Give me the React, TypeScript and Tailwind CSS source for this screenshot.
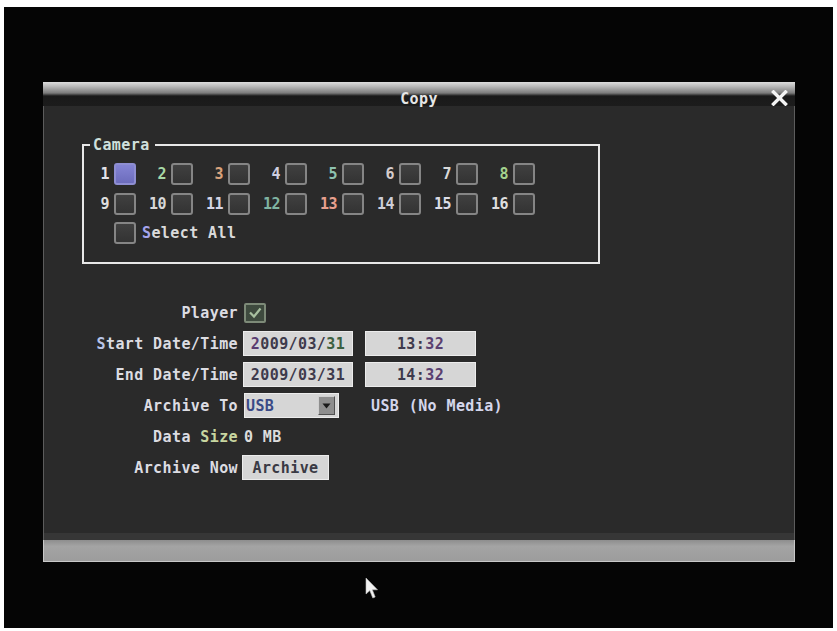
import React from "react";

const mono = "font-['DejaVu_Sans_Mono','Liberation_Mono',monospace] font-bold text-[15px] tracking-[0.4px] leading-[16px]";

const cams: { n: string; c: string }[] = [
  { n: "1", c: "text-[#e4e4ea]" },
  { n: "2", c: "text-[#a6d8a6]" },
  { n: "3", c: "text-[#d9a37c]" },
  { n: "4", c: "text-[#cfcfe0]" },
  { n: "5", c: "text-[#8ec2b0]" },
  { n: "6", c: "text-[#d6cccc]" },
  { n: "7", c: "text-[#d8d8d8]" },
  { n: "8", c: "text-[#a4d28e]" },
  { n: "9", c: "text-[#dedede]" },
  { n: "10", c: "text-[#d8d8d8]" },
  { n: "11", c: "text-[#d6d6e6]" },
  { n: "12", c: "text-[#80b4a2]" },
  { n: "13", c: "text-[#e8a08e]" },
  { n: "14", c: "text-[#cfcfd8]" },
  { n: "15", c: "text-[#dcdce6]" },
  { n: "16", c: "text-[#dedede]" },
];

function Box({ on = false }: { on?: boolean }) {
  return (
    <div
      className={
        on
          ? "w-[22px] h-[22px] rounded-[3px] border-2 border-[#8e8ed2] bg-[linear-gradient(to_bottom,#8484d4,#6c6cbc)]"
          : "w-[22px] h-[22px] rounded-[3px] border-2 border-[#858585] bg-[linear-gradient(to_bottom,#404040,#333333)]"
      }
    />
  );
}

function Label({ children }: { children: React.ReactNode }) {
  return <div className="w-[148px] text-right text-[#dcdce2]">{children}</div>;
}

export default function App() {
  return (
    <div className={`w-[837px] h-[631px] bg-white pt-[7px] pl-[4px] pr-[4px] pb-[3px] ${mono}`}>
      <div className="relative h-full bg-[#050505] pt-[75px] pl-[39px]">
        <div className="w-[752px] flex flex-col">
          {/* title bar */}
          <div className="relative h-[24px] flex justify-center pt-[9px] bg-[linear-gradient(to_bottom,#dedede_0px,#b4b4b4_5px,#7c7c7c_11px,#1a1a1a_14px,#1c1c1c_24px)]">
            <span className="text-[#e6e6e6]">Copy</span>
            <svg className="absolute right-[7px] top-[8px]" width="17" height="16" viewBox="0 0 17 16">
              <path d="M2.5 2 L14.5 14 M14.5 2 L2.5 14" stroke="#f4f4f4" strokeWidth="3.4" strokeLinecap="square" />
            </svg>
          </div>
          {/* body */}
          <div className="h-[427px] bg-[#2a2a2a] border-x border-[#5c5c5c] pl-[38px] pt-[31px]">
            <fieldset className="w-[518px] border-2 border-[#e8e8e8] pl-[6px] pb-[18px]">
              <legend className="pl-[3px] pr-[5px] text-[#cfe0dc]">Camera</legend>
              <div className="pt-[10px] flex flex-col gap-[7.5px]">
                {[0, 1].map((r) => (
                  <div key={r} className="flex gap-[11px]">
                    {cams.slice(r * 8, r * 8 + 8).map((c) => (
                      <div key={c.n} className="flex items-center gap-[5px]">
                        <span className={`w-[19px] text-right tracking-[-0.5px] ${c.c}`}>{c.n}</span>
                        <Box on={c.n === "1"} />
                      </div>
                    ))}
                  </div>
                ))}
                <div className="flex items-center gap-[6px] pl-[24px]">
                  <Box />
                  <span className="text-[#dadada]">
                    <span className="text-[#a4a4ec]">S</span>elect All
                  </span>
                </div>
              </div>
            </fieldset>

            <div className="mt-[33px] ml-[8px] flex flex-col">
              <div className="h-[31px] flex items-center gap-[6px]">
                <Label>Player</Label>
                <div className="w-[22px] h-[20px] rounded-[2px] border-2 border-[#7d8a78] bg-[#3e4a3e] flex items-center justify-center">
                  <svg width="14" height="12" viewBox="0 0 14 12">
                    <path d="M2 5.5 L6 9.5 L12.5 1.5" stroke="#a8c0a0" strokeWidth="2.2" fill="none" />
                  </svg>
                </div>
              </div>
              <div className="h-[31px] flex items-center gap-[5px]">
                <Label>
                  <span className="text-[#b8c4e8]">S</span>tart Date/Time
                </Label>
                <div className="w-[110px] h-[25px] bg-[#d6d6d6] border border-[#ececec] flex items-center justify-center text-[#3e3a4c]">
                  <span className="text-[#5a3c70]">2</span>009/03/<span className="text-[#3c6040]">31</span>
                </div>
                <div className="ml-[7px] w-[111px] h-[25px] bg-[#d6d6d6] border border-[#ececec] flex items-center justify-center text-[#3e3a4c]">
                  13:<span className="text-[#5a4070]">32</span>
                </div>
              </div>
              <div className="h-[31px] flex items-center gap-[5px]">
                <Label>End Date/Time</Label>
                <div className="w-[110px] h-[25px] bg-[#d6d6d6] border border-[#ececec] flex items-center justify-center text-[#3e3a4c]">
                  2009/03/31
                </div>
                <div className="ml-[7px] w-[111px] h-[25px] bg-[#d6d6d6] border border-[#ececec] flex items-center justify-center text-[#3e3a4c]">
                  14:<span className="text-[#5a4070]">32</span>
                </div>
              </div>
              <div className="h-[31px] flex items-center gap-[6px]">
                <Label>Archive To</Label>
                <div className="w-[95px] h-[25px] bg-[#d6d6d6] border border-[#ececec] flex items-center justify-between pl-[1px] pr-[3px]">
                  <span className="text-[#3a4a86]">USB</span>
                  <div className="w-[17px] h-[19px] bg-[#8e8e8e] border border-t-[#d0d0d0] border-l-[#d0d0d0] border-r-[#505050] border-b-[#505050] flex items-center justify-center">
                    <svg width="9" height="6" viewBox="0 0 9 6">
                      <path d="M0.5 0.5 L8.5 0.5 L4.5 5.5 Z" fill="#1a1a1a" />
                    </svg>
                  </div>
                </div>
                <span className="ml-[26px] text-[#d4d6ec]">USB (No Media)</span>
              </div>
              <div className="h-[31px] flex items-center gap-[6px]">
                <Label>
                  Data <span className="text-[#c8d6a0]">Size</span>
                </Label>
                <span className="text-[#dcdcdc]">0 MB</span>
              </div>
              <div className="h-[31px] flex items-center gap-[4px]">
                <Label>Archive Now</Label>
                <div className="w-[87px] h-[25px] bg-[#d6d6d6] border border-[#ececec] flex items-center justify-center text-[#3a3a44]">
                  Archive
                </div>
              </div>
            </div>
          </div>
          {/* bottom */}
          <div className="h-[7px] bg-[#363636] border-x border-[#5c5c5c]" />
          <div className="h-[22px] bg-[linear-gradient(to_bottom,#8e8e8e,#a4a4a4_30%,#9c9c9c)] border-x border-b border-[#c8c8c8]" />
        </div>
        <svg className="absolute left-[361px] top-[570px]" width="14" height="23" viewBox="0 0 14 23">
          <path d="M1 1 L1 17 L4.8 13.6 L7.8 21 L10.2 20 L7.3 12.8 L12.5 12.8 Z" fill="#f2f2f2" stroke="#bdbdbd" strokeWidth="0.6" />
        </svg>
      </div>
    </div>
  );
}
